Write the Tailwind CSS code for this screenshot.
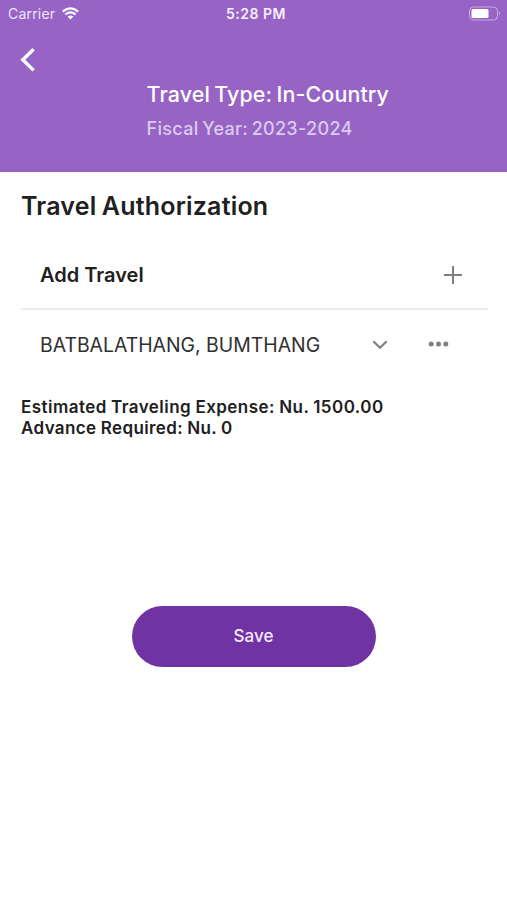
<!DOCTYPE html>
<html lang="en"><head><meta charset="utf-8"><title>Travel Authorization</title>
<script src="https://cdn.jsdelivr.net/npm/@tailwindcss/browser@4"></script></head>
<body class="bg-white font-['Inter',sans-serif] text-[#202020]">
<main class="w-[507px] h-[900px] overflow-hidden flex flex-col">
<header class="h-[172px] bg-[#9764c6] text-white shrink-0">
<div class="grid grid-cols-3 items-center h-[27px] pl-2 pr-[6px] text-[14px]">
<div class="flex items-center gap-[7px]"><span class="tracking-[0.2px] text-[#efe4fa]">Carrier</span>
<svg class="w-[17px] h-[13px]" viewBox="0 0 17 13" fill="none" stroke="white" stroke-width="2.2"><path d="M.8 4.6Q8.5-1.8 16.2 4.6M3.4 7.5Q8.5 3.2 13.6 7.5"/><path d="M5.6 9.5Q8.5 7.4 11.4 9.5L8.5 12.4Z" fill="white" stroke="none"/></svg></div>
<span class="text-center font-semibold whitespace-nowrap tracking-[0.5px] pl-[3px] text-[#f8efff]">5:28 PM</span>
<svg class="justify-self-end w-[32px] h-[15px]" viewBox="0 0 32 15"><rect x=".5" y="1" width="28" height="13" rx="4" fill="none" stroke="white" stroke-opacity=".45"/><rect x="2.5" y="3" width="17" height="9" rx="1.5" fill="white"/><path d="M30 5.5q2 2 0 4z" fill="white" opacity=".5"/></svg>
</div>
<div class="pl-5 pt-[20px] h-[53px]"><svg class="w-4 h-[26px]" viewBox="0 0 16 26" fill="none" stroke="white" stroke-width="3.4"><path d="M13.6 2.2L2.8 12.8L13.6 23.4"/></svg></div>
<div class="pl-[146.5px]"><h1 class="text-[21.4px] leading-[28px] font-medium whitespace-nowrap tracking-[0.15px] [word-spacing:-1.6px]">Travel Type: In-Country</h1>
<p class="mt-[8px] text-[18px] leading-[25px] font-medium text-[#dccbed] whitespace-nowrap tracking-[0.31px] [word-spacing:-1.5px]">Fiscal Year: 2023-2024</p></div>
</header>
<section class="pl-[21px] pr-[19px] pt-[17px]">
<h2 class="text-[25px] leading-[34px] font-semibold whitespace-nowrap tracking-[0.2px] [word-spacing:-1.2px]">Travel Authorization</h2>
<div class="mt-[17px] h-[70px] border-b-2 border-[#ebebeb] flex items-center justify-between pl-[19px] pr-[26px] pt-px"><h3 class="text-[20px] font-semibold">Add Travel</h3>
<svg class="w-[18px] h-[18px]" viewBox="0 0 18 18" stroke="#808080" stroke-width="2"><path d="M9 0V18M0 9H18"/></svg></div>
<div class="h-[69px] flex items-center pl-[19px]"><span class="w-[332px] pt-0.5 text-[19.4px] text-[#303030] whitespace-nowrap">BATBALATHANG, BUMTHANG</span>
<svg class="w-4 h-[10px]" viewBox="0 0 16 10" fill="none" stroke="#808080" stroke-width="2.2"><path d="M1.3 1.2L8 7.8L14.7 1.2"/></svg>
<svg class="ml-[40px] w-[21px] h-[6px] mb-px" viewBox="0 0 21 6" fill="#808080"><circle cx="3.2" cy="3" r="2.5"/><circle cx="10.5" cy="3" r="2.5"/><circle cx="17.8" cy="3" r="2.5"/></svg></div>
<div class="mt-[18px] text-[17px] leading-[21px] font-semibold whitespace-nowrap"><p class="tracking-[0.46px] [word-spacing:-0.5px]">Estimated Traveling Expense: Nu. 1500.00</p><p class="tracking-[0.39px] [word-spacing:-0.5px]">Advance Required: Nu. 0</p></div>
</section>
<button class="mt-[167px] ml-[132px] w-[244px] h-[61px] shrink-0 rounded-full bg-[#7033a3] text-[#f6eaff] text-[17px] font-medium pr-px pt-px">Save</button>
</main></body></html>
